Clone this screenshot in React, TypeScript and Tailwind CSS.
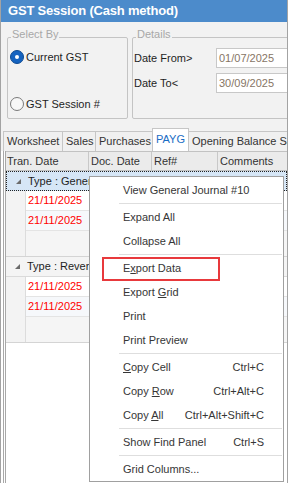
import React from "react";

const tabs = [
    { label: "Worksheet", w: "w-[60px]" },
    { label: "Sales", w: "w-[34px]" },
    { label: "Purchases", w: "w-[58px]" },
    { label: "PAYG", w: "w-[37px]", active: true },
    { label: "Opening Balance Sales", w: "w-[110px]" },
];

function Triangle() {
    return (
        <svg width="7" height="7" viewBox="0 0 7 7" className="shrink-0">
            <polygon points="6,1 6,6 1,6" fill="#6b6b6b" />
        </svg>
    );
}

function GroupRow({ label, selected }: { label: string; selected?: boolean }) {
    return (
        <div
            className={`h-[20px] flex items-center pl-[8px] ${
                selected
                    ? "bg-[#d6e6f6] border border-dotted border-[#222]"
                    : "bg-[#f4f4f4] border-b border-[#dadada]"
            }`}
        >
            <Triangle />
            <span className="ml-[6px] whitespace-nowrap">{label}</span>
        </div>
    );
}

function DataRow({ alt }: { alt?: boolean }) {
    return (
        <div className="h-[20px] flex">
            <div className="w-[20px] shrink-0 bg-[#f3f3f3] border-r border-[#dcdcdc]" />
            <div
                className={`flex-1 flex items-center pl-[2px] text-[#ff0000] border-b border-[#e4e4e4] ${
                    alt ? "bg-[#f6f8fb]" : "bg-white"
                }`}
            >
                21/11/2025
            </div>
        </div>
    );
}

function GroupFooter() {
    return (
        <div className="h-[26px] flex bg-[#f5f5f5] border-b border-[#d4d4d4]">
            <div className="w-[20px] shrink-0 bg-[#f3f3f3] border-r border-[#dcdcdc]" />
        </div>
    );
}

function MenuItem({ children, shortcut }: { children: React.ReactNode; shortcut?: string }) {
    return (
        <div className="h-[24px] flex items-center justify-between pl-[33px] pr-[19px] whitespace-nowrap">
            <span>{children}</span>
            {shortcut && <span>{shortcut}</span>}
        </div>
    );
}

function Separator() {
    return (
        <div className="h-[3px] flex items-center pl-[29px] pr-px">
            <div className="h-px flex-1 bg-[#dedede]" />
        </div>
    );
}

export default function App() {
    return (
        <div className="relative w-[288px] h-[483px] overflow-hidden bg-white border-l border-r border-[#a3a3a3] font-['Liberation_Sans',Arial,sans-serif] text-[11px] text-[#1e1e1e]">
            <div className="h-[22px] bg-[#4c8bcb] pl-[7px] flex items-center text-[13px] font-bold text-white tracking-[-0.2px]">
                GST Session (Cash method)
            </div>

            <div className="bg-[#f2f2f2]">
                {/* top options */}
                <div className="flex gap-[4px] pl-[6px] pt-[5px] overflow-hidden">
                    <fieldset className="w-[121px] h-[92px] shrink-0 border border-[#c4c4c4] rounded-[2px]">
                        <legend className="ml-[3px] px-px leading-[14px] pb-[6px] text-[#a8a8a8]">Select By</legend>
                        <div className="pl-[2px] pt-[3px]">
                            <label className="h-[14px] flex items-center gap-[2px]">
                                <span className="w-[14px] h-[14px] rounded-full bg-[#1563c0] border border-[#0d4a92] flex items-center justify-center">
                                    <span className="w-[4px] h-[4px] rounded-full bg-white" />
                                </span>
                                <span>Current GST</span>
                            </label>
                            <label className="h-[14px] mt-[33px] flex items-center gap-[2px]">
                                <span className="w-[14px] h-[14px] rounded-full bg-[#f7f7f7] border border-[#7a7a7a]" />
                                <span>GST Session #</span>
                            </label>
                        </div>
                    </fieldset>

                    <fieldset className="w-[170px] h-[92px] shrink-0 border border-[#c4c4c4] rounded-[2px]">
                        <legend className="ml-[3px] px-px leading-[14px] pb-[6px] text-[#a8a8a8]">Details</legend>
                        <div className="pl-px pt-px flex flex-col gap-[5px]">
                            <div className="flex items-center">
                                <span className="w-[82px]">Date From&gt;</span>
                                <div className="h-[20px] flex-1 bg-white border border-[#c8c8c8] flex items-center pl-[2px] text-[#867565]">
                                    01/07/2025
                                </div>
                            </div>
                            <div className="flex items-center">
                                <span className="w-[82px]">Date To&lt;</span>
                                <div className="h-[20px] flex-1 bg-white border border-[#c8c8c8] flex items-center pl-[2px] text-[#867565]">
                                    30/09/2025
                                </div>
                            </div>
                        </div>
                    </fieldset>
                </div>

                {/* tabs */}
                <div className="flex items-end h-[23px] mt-[9px] pl-[2px] overflow-hidden">
                    {tabs.map((t, i) => (
                        <div
                            key={t.label}
                            className={`${t.w} shrink-0 border border-b-0 border-[#c6c6c6] pl-[3px] flex items-center whitespace-nowrap ${
                                i > 0 ? "-ml-px" : ""
                            } ${t.active ? "h-[23px] bg-white text-[#1a6cc4] pb-[2px] relative" : "h-[20px] bg-[#f0f0f0] text-[#333]"}`}
                        >
                            {t.label}
                        </div>
                    ))}
                </div>
            </div>

            {/* grid */}
            <div className="ml-[2px] border-l border-[#a8a8a8]">
                <div className="ml-px border-l border-[#a8a8a8]">
                    <div className="h-[20px] flex bg-[#ebebeb] border-t border-b border-[#c2c2c2] text-[#333] whitespace-nowrap">
                        <div className="w-[83px] shrink-0 border-r border-[#c8c8c8] pl-px flex items-center">Tran. Date</div>
                        <div className="w-[63px] shrink-0 border-r border-[#c8c8c8] pl-[2px] flex items-center">Doc. Date</div>
                        <div className="w-[66px] shrink-0 border-r border-[#c8c8c8] pl-[2px] flex items-center">Ref#</div>
                        <div className="flex-1 pl-[2px] flex items-center">Comments</div>
                    </div>
                    <GroupRow label="Type : General Journal" selected />
                    <DataRow />
                    <DataRow alt />
                    <GroupFooter />
                    <GroupRow label="Type : Reversal" />
                    <DataRow />
                    <DataRow alt />
                    <GroupFooter />
                    <div className="h-[142px] bg-white" />
                </div>
            </div>

            {/* context menu */}
            <div className="absolute left-[88px] top-[176px] w-[195px] bg-white border border-[#a0a0a0] pt-px text-[#363636]">
                <MenuItem>View General Journal #10</MenuItem>
                <Separator />
                <MenuItem>Expand All</MenuItem>
                <MenuItem>Collapse All</MenuItem>
                <Separator />
                <MenuItem>
                    E<span className="underline">x</span>port Data
                </MenuItem>
                <MenuItem>
                    Export <span className="underline">G</span>rid
                </MenuItem>
                <MenuItem>Print</MenuItem>
                <MenuItem>Print Preview</MenuItem>
                <Separator />
                <MenuItem shortcut="Ctrl+C">
                    <span className="underline">C</span>opy Cell
                </MenuItem>
                <MenuItem shortcut="Ctrl+Alt+C">
                    Copy <span className="underline">R</span>ow
                </MenuItem>
                <MenuItem shortcut="Ctrl+Alt+Shift+C">
                    Copy <span className="underline">A</span>ll
                </MenuItem>
                <Separator />
                <MenuItem shortcut="Ctrl+S">Show Find Panel</MenuItem>
                <Separator />
                <MenuItem>Grid Columns...</MenuItem>
            </div>

            {/* highlight box */}
            <div className="absolute left-[101px] top-[257px] w-[118px] h-[24px] border-2 border-[#e8393c]" />
        </div>
    );
}
